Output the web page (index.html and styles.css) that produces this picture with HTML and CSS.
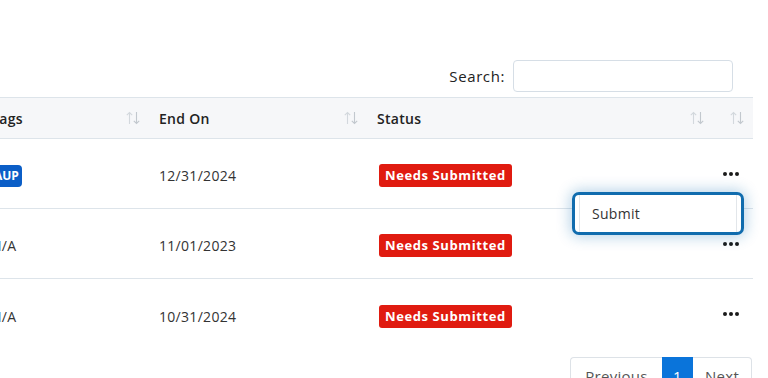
FILE: index.html
```html
<!DOCTYPE html>
<html>
<head>
<meta charset="utf-8">
<link rel="stylesheet" href="styles.css">
</head>
<body>
<div class="page">
  <div class="toolbar">
    <label class="search-label" for="q">Search:</label>
    <input class="search-input" id="q" type="text">
  </div>
  <div class="table-wrap">
    <div class="table">
      <div class="row head">
        <div class="cell c-tags"><span>Tags</span><svg class="sort" width="14" height="14" viewBox="0 0 14 14"><path d="M3.5 13V1.5M0.8 4.2L3.5 1.5 6.2 4.2" fill="none" stroke="#d3d8dd" stroke-width="1.1"/><path d="M10.5 1V12.5M7.8 9.8L10.5 12.5 13.2 9.8" fill="none" stroke="#c2c8ce" stroke-width="1.1"/></svg></div>
        <div class="cell c-end"><span>End On</span><svg class="sort" width="14" height="14" viewBox="0 0 14 14"><path d="M3.5 13V1.5M0.8 4.2L3.5 1.5 6.2 4.2" fill="none" stroke="#d3d8dd" stroke-width="1.1"/><path d="M10.5 1V12.5M7.8 9.8L10.5 12.5 13.2 9.8" fill="none" stroke="#c2c8ce" stroke-width="1.1"/></svg></div>
        <div class="cell c-status"><span>Status</span><svg class="sort" width="14" height="14" viewBox="0 0 14 14"><path d="M3.5 13V1.5M0.8 4.2L3.5 1.5 6.2 4.2" fill="none" stroke="#d3d8dd" stroke-width="1.1"/><path d="M10.5 1V12.5M7.8 9.8L10.5 12.5 13.2 9.8" fill="none" stroke="#c2c8ce" stroke-width="1.1"/></svg></div>
        <div class="cell c-act"><span></span><svg class="sort" width="14" height="14" viewBox="0 0 14 14"><path d="M3.5 13V1.5M0.8 4.2L3.5 1.5 6.2 4.2" fill="none" stroke="#d3d8dd" stroke-width="1.1"/><path d="M10.5 1V12.5M7.8 9.8L10.5 12.5 13.2 9.8" fill="none" stroke="#c2c8ce" stroke-width="1.1"/></svg></div>
      </div>
      <div class="row">
        <div class="cell c-tags"><span class="tag">AUP</span></div>
        <div class="cell c-end">12/31/2024</div>
        <div class="cell c-status"><span class="badge">Needs Submitted</span></div>
        <div class="cell c-act">
          <span class="dots"><i></i><i></i><i></i></span>
          <div class="menu"><div class="menu-item">Submit</div></div>
        </div>
      </div>
      <div class="row">
        <div class="cell c-tags">N/A</div>
        <div class="cell c-end">11/01/2023</div>
        <div class="cell c-status"><span class="badge">Needs Submitted</span></div>
        <div class="cell c-act"><span class="dots"><i></i><i></i><i></i></span></div>
      </div>
      <div class="row last">
        <div class="cell c-tags">N/A</div>
        <div class="cell c-end">10/31/2024</div>
        <div class="cell c-status"><span class="badge">Needs Submitted</span></div>
        <div class="cell c-act"><span class="dots"><i></i><i></i><i></i></span></div>
      </div>
    </div>
  </div>
  <div class="pager">
    <span class="pg prev">Previous</span><span class="pg active">1</span><span class="pg next">Next</span>
  </div>
</div>
</body>
</html>
```
FILE: styles.css
```css
html, body {
  margin: 0;
  padding: 0;
  background: #fff;
  overflow: hidden;
}
body {
  font-family: "Open Sans", "Liberation Sans", sans-serif;
  font-size: 14px;
  letter-spacing: 0.3px;
  color: #333;
}
.page {
  width: 768px;
  height: 378px;
  overflow: hidden;
}
.toolbar {
  height: 97px;
  display: flex;
  justify-content: flex-end;
  align-items: flex-start;
  padding-right: 35px;
  box-sizing: border-box;
  padding-top: 60px;
  gap: 8px;
}
.search-label {
  line-height: 32px;
  color: #222;
  font-size: 15px;
  letter-spacing: 0.6px;
}
.search-input {
  width: 220px;
  height: 32px;
  box-sizing: border-box;
  border: 1px solid #d6dee6;
  border-radius: 4px;
  margin: 0;
  padding: 0 8px;
}
.table-wrap {
  width: 753px;
  position: relative;
}
.table {
  margin-left: -21px;
}
.row {
  display: grid;
  grid-template-columns: 168px 218px 346px 40px;
  height: 70px;
  border-bottom: 1px solid #dde4ea;
  box-sizing: border-box;
}
.row.last {
  border-bottom: none;
}
.row.head {
  height: 42px;
  background: #f6f7f9;
  border-top: 1px solid #dde4ea;
  font-weight: 600;
  color: #222;
}
.cell {
  display: flex;
  align-items: center;
  justify-content: space-between;
  padding: 0 7px 0 12px;
  position: relative;
  white-space: nowrap;
}
.row:not(.head) .cell {
  justify-content: flex-start;
  padding-top: 4px;
}
.row:not(.head) .c-act {
  padding-top: 0;
}
.sort {
  display: block;
  flex: none;
}
.tag {
  background: #0b5ec7;
  color: #fff;
  font-weight: 700;
  font-size: 12px;
  letter-spacing: 0;
  padding: 2px 3px 3px;
  border-radius: 4px;
}
.badge {
  background: #e01b10;
  color: #fff;
  font-weight: 700;
  font-size: 13px;
  padding: 2px 6px 3px;
  border-radius: 3px;
  letter-spacing: 0.6px;
  margin-left: 2px;
}
.dots {
  display: flex;
  gap: 2px;
}
.dots i {
  display: block;
  width: 4px;
  height: 4px;
  border-radius: 50%;
  background: #1a1a1a;
}
.menu {
  position: absolute;
  right: 7px;
  top: 53px;
  width: 172px;
  height: 43px;
  box-sizing: border-box;
  border: 3px solid #106cae;
  border-radius: 7px;
  background: #fff;
  box-shadow: 0 0 14px 2px rgba(16, 108, 174, 0.3);
  z-index: 5;
  padding: 0 4px;
}
.menu-item {
  height: 100%;
  border-left: 1px solid #e2e6ea;
  border-right: 1px solid #e2e6ea;
  padding-left: 12px;
  display: flex;
  align-items: center;
  color: #333;
}
.pager {
  display: flex;
  justify-content: flex-end;
  padding-right: 16px;
  margin-top: 8px;
}
.pg {
  height: 38px;
  display: flex;
  align-items: center;
  justify-content: center;
  border: 1px solid #dde2e7;
  box-sizing: border-box;
  color: #555;
  font-size: 15px;
}
.prev {
  width: 92px;
  border-radius: 4px 0 0 4px;
  border-right: none;
}
.active {
  width: 31px;
  background: #0a74da;
  border-color: #0a74da;
  color: #fff;
}
.next {
  width: 59px;
  border-left: none;
  border-radius: 0 4px 4px 0;
}
```
